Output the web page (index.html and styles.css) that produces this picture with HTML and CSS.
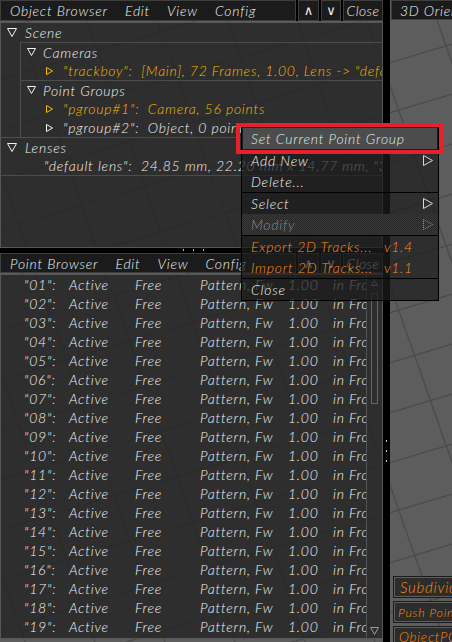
FILE: index.html
```html
<!DOCTYPE html>
<html>
<head>
<meta charset="utf-8">
<link rel="stylesheet" href="styles.css">
</head>
<body>
<div class="app">
  <svg class="grid-bg" width="452" height="642" viewBox="0 0 452 642">
    <g stroke="#4b4b4b" stroke-width="1.3">
      <line x1="0" y1="30" x2="452" y2="-106"/>
      <line x1="0" y1="80" x2="452" y2="-56"/>
      <line x1="0" y1="130" x2="452" y2="-6"/>
      <line x1="0" y1="180" x2="452" y2="44"/>
      <line x1="0" y1="230" x2="452" y2="94"/>
      <line x1="0" y1="280" x2="452" y2="144"/>
      <line x1="0" y1="330" x2="452" y2="194"/>
      <line x1="0" y1="380" x2="452" y2="244"/>
      <line x1="0" y1="430" x2="452" y2="294"/>
      <line x1="0" y1="480" x2="452" y2="344"/>
      <line x1="0" y1="530" x2="452" y2="394"/>
      <line x1="0" y1="580" x2="452" y2="444"/>
      <line x1="0" y1="630" x2="452" y2="494"/>
      <line x1="0" y1="680" x2="452" y2="544"/>
      <line x1="0" y1="730" x2="452" y2="594"/>
      <line x1="0" y1="780" x2="452" y2="644"/>
      <line x1="-200" y1="0" x2="25" y2="642"/>
      <line x1="-130" y1="0" x2="95" y2="642"/>
      <line x1="-60" y1="0" x2="165" y2="642"/>
      <line x1="10" y1="0" x2="235" y2="642"/>
      <line x1="80" y1="0" x2="305" y2="642"/>
      <line x1="150" y1="0" x2="375" y2="642"/>
      <line x1="220" y1="0" x2="445" y2="642"/>
      <line x1="290" y1="0" x2="515" y2="642"/>
      <line x1="360" y1="0" x2="585" y2="642"/>
      <line x1="430" y1="0" x2="655" y2="642"/>
    </g>
  </svg>

  <div class="left">
    <section class="panel obj">
      <div class="titlebar">
        <div class="menubar"><span>Object Browser</span><span>Edit</span><span>View</span><span>Config</span></div>
        <div class="tbtn up">&#8743;</div>
        <div class="tbtn dn">&#8744;</div>
        <div class="tbtn close">Close</div>
      </div>
      <div class="pbody tree">
        <div class="row top"><svg class="tri-d" width="10" height="9" viewBox="0 0 10 9"><path d="M0.5 0.5H9.5L5 8.5Z"/></svg><span>Scene</span></div>
        <div class="group">
          <div class="row sub first"><svg class="tri-d" width="9" height="8" viewBox="0 0 9 8"><path d="M0.5 0.5H8.5L4.5 7.5Z"/></svg><span>Cameras</span></div>
          <div class="row leaf yellow"><svg class="tri-r" width="7" height="8" viewBox="0 0 7 8"><path d="M0.5 0.5L6.5 4L0.5 7.5Z"/></svg><span>"trackboy":&nbsp; [Main], 72 Frames, 1.00, Lens -&gt; "default lens"</span></div>
          <div class="subgroup">
            <div class="row sub first"><svg class="tri-d" width="9" height="8" viewBox="0 0 9 8"><path d="M0.5 0.5H8.5L4.5 7.5Z"/></svg><span>Point Groups</span></div>
            <div class="row leaf yellow"><svg class="tri-r" width="7" height="8" viewBox="0 0 7 8"><path d="M0.5 0.5L6.5 4L0.5 7.5Z"/></svg><span>"pgroup#1":&nbsp; Camera, 56 points</span></div>
            <div class="row leaf"><svg class="tri-r" width="7" height="8" viewBox="0 0 7 8"><path d="M0.5 0.5L6.5 4L0.5 7.5Z"/></svg><span>"pgroup#2":&nbsp; Object, 0 points</span></div>
          </div>
        </div>
        <div class="section">
          <div class="row top first"><svg class="tri-d" width="10" height="9" viewBox="0 0 10 9"><path d="M0.5 0.5H9.5L5 8.5Z"/></svg><span>Lenses</span></div>
          <div class="row lens"><span>"default lens":&nbsp; 24.85 mm, 22.20 mm x 14.77 mm, "3D"</span></div>
        </div>
        <div class="section end"></div>
      </div>
    </section>

    <div class="hsplit"><i></i><i></i><i></i></div>

    <section class="panel pts">
      <div class="titlebar">
        <div class="menubar"><span>Point Browser</span><span>Edit</span><span>View</span><span>Config</span></div>
        <div class="tbtn up">&#8743;</div>
        <div class="tbtn dn">&#8744;</div>
        <div class="tbtn close">Close</div>
      </div>
      <div class="pbody list">
        <div class="rows">
          <div class="prow"><span>"01":</span><span>Active</span><span>Free</span><span>Pattern, Fw</span><span>1.00</span><span>in Front</span></div>
          <div class="prow"><span>"02":</span><span>Active</span><span>Free</span><span>Pattern, Fw</span><span>1.00</span><span>in Front</span></div>
          <div class="prow"><span>"03":</span><span>Active</span><span>Free</span><span>Pattern, Fw</span><span>1.00</span><span>in Front</span></div>
          <div class="prow"><span>"04":</span><span>Active</span><span>Free</span><span>Pattern, Fw</span><span>1.00</span><span>in Front</span></div>
          <div class="prow"><span>"05":</span><span>Active</span><span>Free</span><span>Pattern, Fw</span><span>1.00</span><span>in Front</span></div>
          <div class="prow"><span>"06":</span><span>Active</span><span>Free</span><span>Pattern, Fw</span><span>1.00</span><span>in Front</span></div>
          <div class="prow"><span>"07":</span><span>Active</span><span>Free</span><span>Pattern, Fw</span><span>1.00</span><span>in Front</span></div>
          <div class="prow"><span>"08":</span><span>Active</span><span>Free</span><span>Pattern, Fw</span><span>1.00</span><span>in Front</span></div>
          <div class="prow"><span>"09":</span><span>Active</span><span>Free</span><span>Pattern, Fw</span><span>1.00</span><span>in Front</span></div>
          <div class="prow"><span>"10":</span><span>Active</span><span>Free</span><span>Pattern, Fw</span><span>1.00</span><span>in Front</span></div>
          <div class="prow"><span>"11":</span><span>Active</span><span>Free</span><span>Pattern, Fw</span><span>1.00</span><span>in Front</span></div>
          <div class="prow"><span>"12":</span><span>Active</span><span>Free</span><span>Pattern, Fw</span><span>1.00</span><span>in Front</span></div>
          <div class="prow"><span>"13":</span><span>Active</span><span>Free</span><span>Pattern, Fw</span><span>1.00</span><span>in Front</span></div>
          <div class="prow"><span>"14":</span><span>Active</span><span>Free</span><span>Pattern, Fw</span><span>1.00</span><span>in Front</span></div>
          <div class="prow"><span>"15":</span><span>Active</span><span>Free</span><span>Pattern, Fw</span><span>1.00</span><span>in Front</span></div>
          <div class="prow"><span>"16":</span><span>Active</span><span>Free</span><span>Pattern, Fw</span><span>1.00</span><span>in Front</span></div>
          <div class="prow"><span>"17":</span><span>Active</span><span>Free</span><span>Pattern, Fw</span><span>1.00</span><span>in Front</span></div>
          <div class="prow"><span>"18":</span><span>Active</span><span>Free</span><span>Pattern, Fw</span><span>1.00</span><span>in Front</span></div>
          <div class="prow"><span>"19":</span><span>Active</span><span>Free</span><span>Pattern, Fw</span><span>1.00</span><span>in Front</span></div>
        </div>
        <div class="scroll">
          <svg class="sarrow" width="7" height="6" viewBox="0 0 7 6"><path d="M3.5 0.5L6.5 5.5H0.5Z"/></svg>
          <div class="thumb"></div>
          <div class="sfill"></div>
          <svg class="sarrow" width="9" height="8" viewBox="0 0 9 8"><path d="M0.5 0.5H8.5L4.5 7.5Z"/></svg>
        </div>
      </div>
    </section>
  </div>

  <div class="vsplit"><i></i><i></i><i></i></div>

  <div class="view3d">
    <div class="vtitle"><div class="tbtn orient">3D Orien</div></div>
    <div class="vfill"></div>
    <div class="vbtns">
      <div class="vbtn big">Subdivide</div>
      <div class="vbtn small">Push Points</div>
      <div class="vbtn mid">ObjectPG</div>
    </div>
  </div>

  <div class="menu">
    <div class="hl-frame"><div class="mi hl">Set Current Point Group</div></div>
    <div class="mi"><span>Add New</span><svg class="tri-m" width="10" height="11" viewBox="0 0 10 11"><path d="M0.5 0.5L9.5 5.5L0.5 10.5Z"/></svg></div>
    <div class="mi"><span>Delete...</span></div>
    <div class="msep"></div>
    <div class="mi"><span>Select</span><svg class="tri-m" width="10" height="11" viewBox="0 0 10 11"><path d="M0.5 0.5L9.5 5.5L0.5 10.5Z"/></svg></div>
    <div class="mi disabled"><span>Modify</span><svg class="tri-m dotted" width="10" height="11" viewBox="0 0 10 11"><path d="M0.5 0.5L9.5 5.5L0.5 10.5Z"/></svg></div>
    <div class="msep"></div>
    <div class="mi orange"><span class="mname">Export 2D Tracks...</span><span>v1.4</span></div>
    <div class="mi orange"><span class="mname">Import 2D Tracks...</span><span>v1.1</span></div>
    <div class="msep"></div>
    <div class="mi"><span>Close</span></div>
  </div>
</div>
</body>
</html>
```

FILE: styles.css
```css
* { box-sizing: border-box; margin: 0; padding: 0; }

body {
  width: 452px;
  height: 642px;
  overflow: hidden;
  background: #000;
  font-family: Lato, "Open Sans", "DejaVu Sans", sans-serif;
  font-style: italic;
  font-weight: 300;
  font-size: 14px;
  letter-spacing: 0.75px;
  color: #f2f2f2;
}

.app {
  position: relative;
  width: 452px;
  height: 642px;
  display: flex;
  background: #5d5d5d;
  overflow: hidden;
}

.grid-bg {
  position: absolute;
  left: 0;
  top: 0;
  z-index: 0;
}

.left, .vsplit, .view3d { position: relative; z-index: 1; }

.left {
  width: 383px;
  display: flex;
  flex-direction: column;
}

.panel { display: flex; flex-direction: column; }
.panel.obj { height: 248px; }
.panel.pts { height: 386px; }

.titlebar {
  height: 21px;
  display: flex;
  gap: 2px;
  background: #000;
  flex: none;
}
.pts .titlebar { height: 20px; }

.menubar {
  flex: 1;
  display: flex;
  gap: 17px;
  align-items: center;
  padding-left: 9px;
  background: #1b1b1b;
  border: 1px solid #3e3e3e;
  white-space: nowrap;
  overflow: hidden;
}

.tbtn {
  background: #1b1b1b;
  border: 1px solid #3e3e3e;
  display: flex;
  align-items: center;
  justify-content: center;
  white-space: nowrap;
  font-style: normal;
}
.tbtn.up { width: 21px; font-family: "DejaVu Sans", sans-serif; font-weight: 400; font-size: 13px; letter-spacing: 0; }
.tbtn.dn { width: 20px; font-family: "DejaVu Sans", sans-serif; font-weight: 400; font-size: 13px; letter-spacing: 0; }
.tbtn.close { width: 40px; font-style: italic; letter-spacing: 0.4px; }

.pbody {
  flex: 1;
  margin-top: 1px;
  border: 1px solid #575757;
  background: rgba(33, 33, 33, 0.78);
  overflow: hidden;
}

/* tree */
.row {
  height: 19px;
  display: flex;
  align-items: center;
  white-space: nowrap;
  overflow: hidden;
}
.row.first { height: 18px; }
.row svg { flex: none; }
.row svg path { fill: none; stroke: currentColor; stroke-width: 1; }
.row.top { padding-left: 6px; gap: 8px; }
.row.sub { padding-left: 6px; gap: 7px; }
.row.leaf { padding-left: 25px; gap: 10px; }
.row.lens { padding-left: 43px; }
.yellow { color: #f5b800; }

.group {
  margin-left: 19px;
  border-left: 1px solid #4c4c4c;
  border-top: 1px solid #4c4c4c;
}
.subgroup { border-top: 1px solid #4c4c4c; }
.section { border-top: 1px solid #4c4c4c; }

.hsplit {
  height: 5px;
  background: #000;
  display: flex;
  gap: 9px;
  padding-left: 183px;
  padding-top: 1px;
}
.hsplit i { display: block; width: 1px; height: 2px; background: #bbb; }

/* point list */
.list { display: flex; }
.rows { flex: 1; overflow: hidden; }
.prow {
  height: 19px;
  display: grid;
  grid-template-columns: 45px 66px 65px 88px 45px 80px;
  align-items: center;
  padding-left: 23px;
  white-space: nowrap;
  color: #f2f2f2;
}

.scroll {
  width: 16px;
  flex: none;
  border-left: 1px solid #555;
  display: flex;
  flex-direction: column;
  align-items: center;
  padding-top: 5px;
  padding-bottom: 3px;
}
.scroll svg path { fill: none; stroke: #9a9a9a; stroke-width: 1; }
.thumb {
  margin-top: 7px;
  width: 7px;
  height: 111px;
  border: 1px solid #666;
}
.sfill { flex: 1; }

.vsplit {
  width: 7px;
  background: #000;
  display: flex;
  flex-direction: column;
  align-items: center;
  gap: 8px;
  padding-top: 440px;
}
.vsplit i { display: block; width: 1px; height: 2px; background: #ccc; margin-left: -1px; }

/* 3d view */
.view3d {
  flex: 1;
  display: flex;
  flex-direction: column;
  overflow: hidden;
}
.vtitle { height: 21px; padding-left: 1px; display: flex; }
.tbtn.orient {
  width: 80px;
  justify-content: flex-start;
  padding-left: 8px;
  font-style: italic;
  height: 20px;
  border-right: none;
}
.vfill { flex: 1; }
.vbtns {
  display: flex;
  flex-direction: column;
  gap: 5px;
  margin-bottom: -5px;
  padding-left: 4px;
}
.vbtn {
  width: 80px;
  height: 20px;
  background: #2c2c2c;
  border: 1px solid #5e5e5e;
  box-shadow: 0 0 0 1px #1a1a1a;
  color: #ff8a00;
  display: flex;
  align-items: center;
  padding-left: 5px;
  white-space: nowrap;
}
.vbtn.big { font-size: 15px; }
.vbtn.small { font-size: 12.5px; padding-left: 3px; }
.vbtn.mid { font-size: 13.5px; padding-left: 4px; }

/* context menu */
.menu {
  position: absolute;
  z-index: 5;
  left: 241px;
  top: 126px;
  width: 198px;
  background: rgba(28, 28, 28, 0.72);
  border: 1px solid #000;
}
.hl-frame {
  margin: -4px -6px -4px;
  border: 4px solid #e8202c;
  padding: 0 2px;
  position: relative;
  z-index: 2;
}
.mi {
  height: 21px;
  display: flex;
  align-items: center;
  justify-content: space-between;
  padding: 0 5px 0 9px;
  color: #f4f4f4;
  white-space: nowrap;
}
.mi.hl {
  height: 23px;
  background: #4c4c4c;
  border: 1px solid #1c1c1c;
  padding-left: 8px;
  color: #d4f4f4;
}
.mi svg path { fill: none; stroke: #d8d8d8; stroke-width: 1; }
.mi.disabled {
  color: #8c8c8c;
  background: repeating-conic-gradient(#3b3b3b 0 25%, #262626 0 50%) 0 0 / 2px 2px;
}
.mi.disabled svg path { stroke: #9a9a9a; stroke-dasharray: 1 1; }
.mi.orange { color: #ff8c1a; justify-content: flex-start; }
.mname { width: 133px; }
.msep { height: 1px; background: #000; }
```
